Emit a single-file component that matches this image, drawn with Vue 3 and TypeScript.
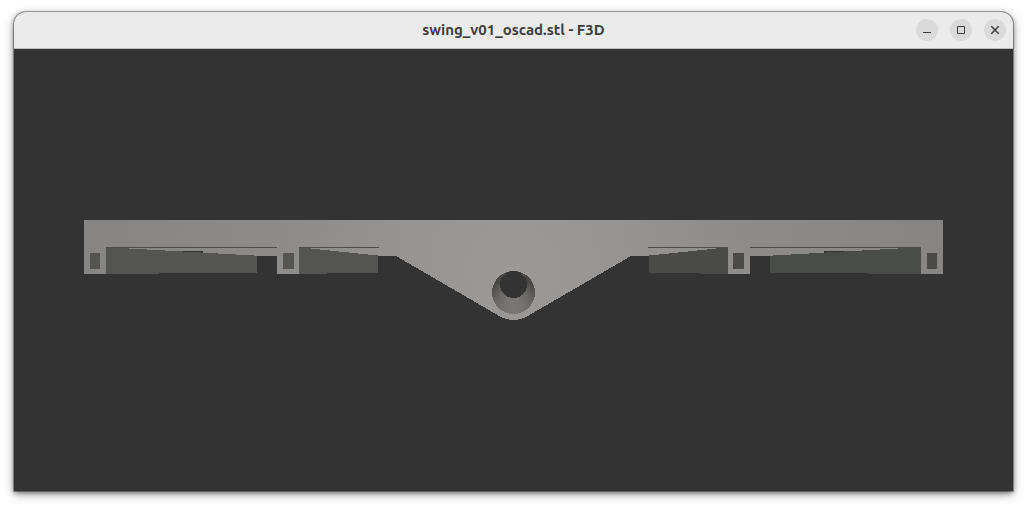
<script setup lang="ts">
interface Facet { points: string; fill: string }

const centre = 513.5
const facetCount = 36

// Tube wall between the near rim and the smaller far opening.
const facets: Facet[] = Array.from({ length: facetCount }, (_, i) => {
  const at = (k: number, r: number, cy: number): string => {
    const a = (k / facetCount) * Math.PI * 2
    return `${(centre + r * Math.cos(a)).toFixed(2)},${(cy + r * Math.sin(a)).toFixed(2)}`
  }
  const mid = ((i + 0.5) / facetCount) * Math.PI * 2
  const light = Math.max(0, Math.sin(mid) * 0.75 + 0.25)
  const v = Math.round(72 + 48 * light)
  return {
    points: [at(i, 21.5, 292.5), at(i + 1, 21.5, 292.5), at(i + 1, 13.5, 284.5), at(i, 13.5, 284.5)].join(' '),
    fill: `rgb(${v}, ${v - 1}, ${v - 4})`,
  }
})
</script>

<template>
  <main class="desktop">
    <section class="window">
      <header class="titlebar">
        <h1 class="title">swing_v01_oscad.stl - F3D</h1>
        <div class="controls">
          <button type="button" class="control" aria-label="Minimize">
            <svg viewBox="0 0 22 22" aria-hidden="true"><path d="M7 13.5h8" /></svg>
          </button>
          <button type="button" class="control" aria-label="Maximize">
            <svg viewBox="0 0 22 22" aria-hidden="true"><path d="M7.5 7.5h7v7h-7z" /></svg>
          </button>
          <button type="button" class="control" aria-label="Close">
            <svg viewBox="0 0 22 22" aria-hidden="true"><path class="cross" d="M7.3 7.3l7.4 7.4M14.7 7.3l-7.4 7.4" /></svg>
          </button>
        </div>
      </header>
      <svg class="viewport" viewBox="14 49 999 442" role="img" aria-label="3D model" shape-rendering="crispEdges">
        <defs>
          <radialGradient id="metal" gradientUnits="userSpaceOnUse" cx="513.5" cy="270" r="430">
            <stop offset="0" stop-color="#9b9a98" />
            <stop offset="0.22" stop-color="#969593" />
            <stop offset="0.5" stop-color="#8e8d8b" />
            <stop offset="1" stop-color="#868583" />
          </radialGradient>
        </defs>
        <path
          fill="url(#metal)"
          d="M84 220H943V274H921V256H750V274H728V256H631L527.25 316.3A27.5 27.5 0 0 1 499.75 316.3L396 256H299V274H277V256H106V274H84Z"
        />
        <g fill="#545452">
          <path d="M106 247H111V248H129V249H147V250H165V251H183V252H203V253H218V254H236V255H254V256H257V273H159V274H106Z" />
          <path d="M299 247H302V248H311V249H320V250H330V251H339V252H349V253H358V254H368V255H378V273H327V274H299Z" />
          <path d="M90 253h10v16h-10zM283 253h11v16h-11z" />
        </g>
        <path fill="#4a4a49" d="M728 247H725V248H716V249H707V250H697V251H688V252H678V253H669V254H659V255H649V273H700V274H728Z" />
        <path fill="#4a4c4a" d="M921 247H916V248H898V249H880V250H862V251H844V252H824V253H809V254H791V255H773V256H770V273H868V274H921Z" />
        <path fill="#4a4a49" d="M733 253h11v16h-11zM927 253h10v16h-10z" />
        <path fill="#4d4d4b" d="M106 247H277v1H106zM299 247H379v1H299zM648 247H728v1H648zM750 247H921v1H750z" />
        <path fill="#333" d="M183 251h20v2h-2v-1h-18zM824 251h20v1h-18v1h-2z" />
        <circle cx="513.5" cy="292.5" r="21.5" fill="#5c5b59" />
        <polygon v-for="(facet, i) in facets" :key="i" :points="facet.points" :fill="facet.fill" />
        <circle cx="513.5" cy="284.5" r="13.5" fill="#333" />
      </svg>
    </section>
  </main>
</template>

<style>
body {
  margin: 0;
  background: #fff;
}
</style>

<style scoped>
.desktop {
  padding: 12px 14px 17px;
  overflow: hidden;
  font-family: Ubuntu, "Open Sans", "Noto Sans", sans-serif;
}

.window {
  border-radius: 12px 12px 0 0;
  background: #333;
  box-shadow: 0 0 0 1px rgba(0, 0, 0, 0.3), 0 2px 5px rgba(0, 0, 0, 0.45), 0 3px 12px rgba(0, 0, 0, 0.3);
}

.titlebar {
  display: grid;
  grid-template-columns: 1fr auto 1fr;
  align-items: center;
  box-sizing: border-box;
  height: 37px;
  padding: 0 7px;
  border-bottom: 1px solid #bdbdbd;
  border-radius: 12px 12px 0 0;
  background: #ebebeb;
}

.title {
  grid-column: 2;
  margin: 0;
  color: #3d3d3d;
  font-size: 15px;
  font-weight: 700;
  line-height: 20px;
  white-space: nowrap;
}

.controls {
  display: flex;
  gap: 12px;
  justify-self: end;
}

.control {
  width: 22px;
  height: 22px;
  padding: 0;
  border: 0;
  border-radius: 50%;
  background: #dadada;
}

.control svg {
  display: block;
  fill: none;
  stroke: #3d3d3d;
  stroke-width: 1;
}

.control .cross {
  stroke-width: 1.5;
}

.viewport {
  display: block;
  width: 100%;
  height: auto;
}
</style>
